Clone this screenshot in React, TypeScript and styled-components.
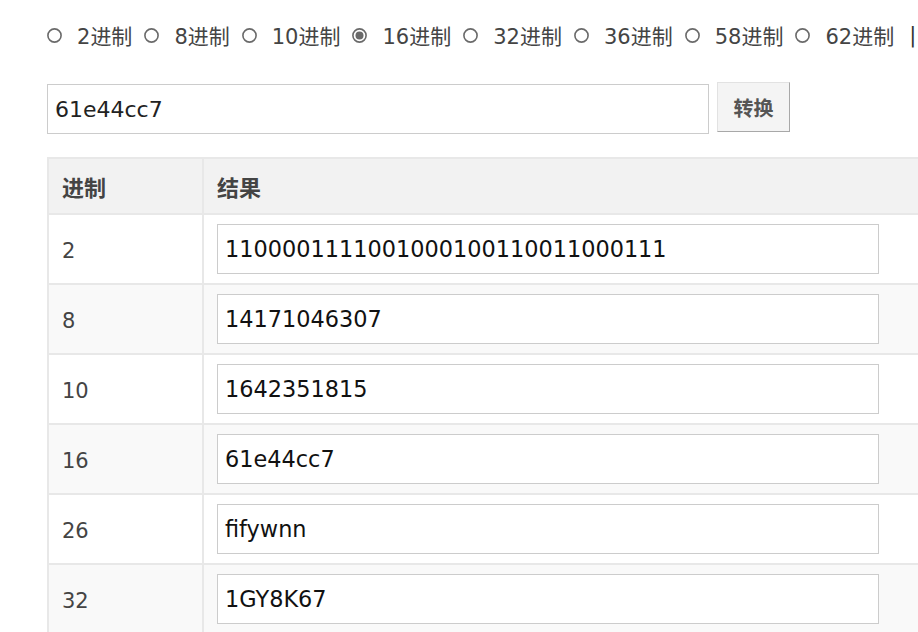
import React from "react";
import styled, { createGlobalStyle } from "styled-components";

const Global = createGlobalStyle`
  html, body { margin: 0; padding: 0; background: #fff; overflow: hidden; }
  body { font-family: "DejaVu Sans", "Noto Sans CJK SC", sans-serif; color: #444; }
`;

const Page = styled.div`
  padding: 16px 0 0 47px;
  width: 918px;
  box-sizing: border-box;
`;

const RadioRow = styled.div`
  display: flex;
  align-items: center;
  white-space: nowrap;
  height: 38px;
  font-size: 21px;
  color: #444;
`;

const RadioLabel = styled.label`
  display: inline-flex;
  align-items: center;
  flex-shrink: 0;
  margin-right: 12px;
`;

const CircleSvg = styled.svg`
  flex-shrink: 0;
  width: 15px;
  height: 15px;
  min-width: 15px;
  margin: 0 15px 0 0;
  display: block;
`;

const Radio = ({ checked }: { checked?: boolean }) => (
  <CircleSvg width="15" height="15" viewBox="0 0 15 15">
    <circle cx="7.5" cy="7.5" r="6.6" fill="#fff" stroke="#6a6a6a" strokeWidth="1.6" />
    {checked && <circle cx="7.5" cy="7.5" r="4" fill="#6a6a6a" />}
  </CircleSvg>
);

const Bar = styled.span`
  flex-shrink: 0;
  margin-left: 3px;
  color: #333;
`;

const FormRow = styled.div`
  display: flex;
  align-items: flex-start;
  gap: 8px;
  margin-top: 28px;
`;

const MainInput = styled.div`
  width: 662px;
  height: 50px;
  border: 1px solid #ccc;
  box-sizing: border-box;
  display: flex;
  align-items: center;
  padding-left: 7px;
  font-size: 22px;
  color: #222;
  margin-top: 2px;
`;

const ConvertButton = styled.button`
  width: 73px;
  height: 50px;
  background: #f4f4f4;
  border: 1px solid #e2e2e2;
  border-right-color: #a8a8a8;
  border-bottom-color: #a8a8a8;
  font-family: "Noto Sans CJK SC", sans-serif;
  font-weight: 700;
  font-size: 20px;
  color: #555;
  padding: 0;
`;

const Table = styled.table`
  margin-top: 23px;
  width: 920px;
  border-collapse: collapse;
  font-size: 21px;
`;

const HeadCell = styled.th<{ $w?: number }>`
  background: #f2f2f2;
  border: 2px solid #e8e8e8;
  height: 56px;
  text-align: left;
  padding: 0 0 0 13px;
  font-family: "Noto Sans CJK SC", sans-serif;
  font-weight: 700;
  font-size: 22px;
  color: #444;
  width: ${(p) => (p.$w ? `${p.$w}px` : "auto")};
  box-sizing: border-box;
`;

const Row = styled.tr<{ $alt?: boolean }>`
  background: ${(p) => (p.$alt ? "#f9f9f9" : "#fff")};
`;

const Cell = styled.td`
  border: 2px solid #e8e8e8;
  height: 70px;
  padding: 3px 0 0 13px;
  color: #444;
  box-sizing: border-box;
  vertical-align: middle;
`;

const ResultCell = styled(Cell)`
  padding-top: 0;
`;

const ResultBox = styled.div`
  width: 662px;
  height: 50px;
  border: 1px solid #ccc;
  background: #fff;
  box-sizing: border-box;
  display: flex;
  align-items: center;
  padding-left: 7px;
  color: #111;
  font-size: 22.4px;
`;

const bases = ["2", "8", "10", "16", "32", "36", "58", "62"];
const results: [string, string][] = [
  ["2", "1100001111001000100110011000111"],
  ["8", "14171046307"],
  ["10", "1642351815"],
  ["16", "61e44cc7"],
  ["26", "fifywnn"],
  ["32", "1GY8K67"],
];

export default function App() {
  return (
    <>
      <Global />
      <Page>
        <RadioRow>
          {bases.map((b) => (
            <RadioLabel key={b}>
              <Radio checked={b === "16"} />
              {b}进制
            </RadioLabel>
          ))}
          <Bar>|</Bar>
        </RadioRow>
        <FormRow>
          <MainInput>61e44cc7</MainInput>
          <ConvertButton>转换</ConvertButton>
        </FormRow>
        <Table>
          <thead>
            <tr>
              <HeadCell $w={155}>进制</HeadCell>
              <HeadCell>结果</HeadCell>
            </tr>
          </thead>
          <tbody>
            {results.map(([b, v], i) => (
              <Row key={b} $alt={i % 2 === 1}>
                <Cell>{b}</Cell>
                <ResultCell>
                  <ResultBox>{v}</ResultBox>
                </ResultCell>
              </Row>
            ))}
          </tbody>
        </Table>
      </Page>
    </>
  );
}
